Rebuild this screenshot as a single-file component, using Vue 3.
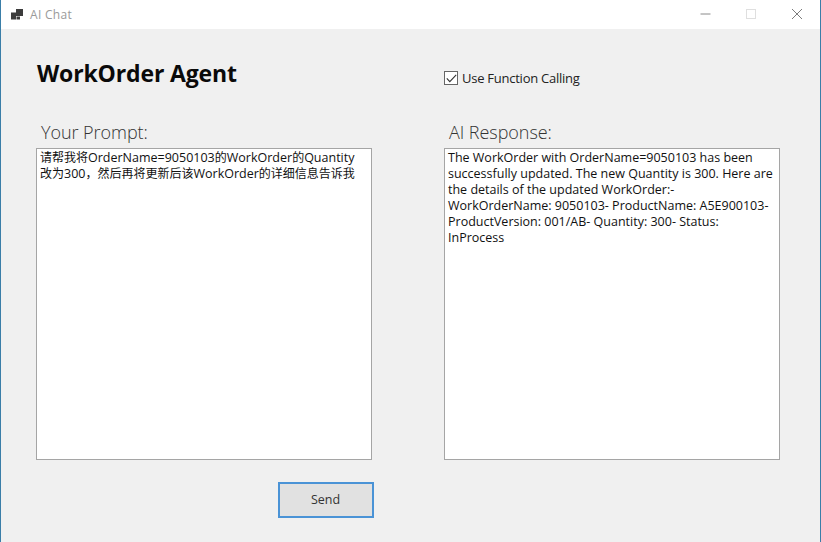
<script setup>
const promptLines = [
  [['c', '请帮我将'], ['l', 'OrderName=9050103'], ['c', '的'], ['l', 'WorkOrder'], ['c', '的'], ['l', 'Quantity']],
  [['c', '改为'], ['l', '300'], ['c', '，然后再将更新后该'], ['l', 'WorkOrder'], ['c', '的详细信息告诉我']]
]
const responseLines = [
  'The WorkOrder with OrderName=9050103 has been',
  'successfully updated. The new Quantity is 300. Here are',
  'the details of the updated WorkOrder:-',
  'WorkOrderName: 9050103- ProductName: A5E900103-',
  'ProductVersion: 001/AB- Quantity: 300- Status:',
  'InProcess'
]
</script>

<template>
  <div class="window">
    <header class="titlebar">
      <div class="title-left">
        <svg class="app-icon" width="12" height="12" viewBox="0 0.5 12 12">
          <rect x="0" y="4" width="5" height="7" fill="#3c3c3c" />
          <rect x="5" y="0" width="7" height="7.5" fill="#3c3c3c" />
          <rect x="5.5" y="8" width="3.5" height="3" fill="#3c3c3c" />
        </svg>
        <span class="app-title">AI Chat</span>
      </div>
      <div class="controls">
        <svg width="12" height="12" viewBox="0 0 12 12"><path d="M1.5 6H11.5" stroke="#8a8a8a" fill="none" /></svg>
        <svg width="12" height="12" viewBox="0 0 12 12"><rect x="1.5" y="1.5" width="9" height="9" stroke="#dfdfdf" fill="none" /></svg>
        <svg width="12" height="12" viewBox="0 0 12 12"><path d="M1 1L11 11M11 1L1 11" stroke="#7c7c7c" fill="none" /></svg>
      </div>
    </header>
    <main class="content">
      <div class="top-row">
        <h1 class="heading">WorkOrder Agent</h1>
        <label class="check">
          <span class="box">
            <svg width="11" height="9" viewBox="0 0 11 9"><path d="M0.8 4.4L3.8 7.6L10.2 0.8" stroke="#333" stroke-width="1.1" fill="none" /></svg>
          </span>
          <span>Use Function Calling</span>
        </label>
      </div>
      <div class="panels">
        <section class="panel">
          <div class="panel-label">Your Prompt:</div>
          <div class="textbox">
            <div v-for="(line, i) in promptLines" :key="i"><span v-for="(seg, j) in line" :key="j" :class="seg[0] === 'c' ? 'cjk' : ''">{{ seg[1] }}</span></div>
          </div>
        </section>
        <section class="panel">
          <div class="panel-label">AI Response:</div>
          <div class="textbox">
            <div v-for="line in responseLines" :key="line">{{ line }}</div>
          </div>
        </section>
      </div>
      <div class="actions">
        <button class="send">Send</button>
      </div>
    </main>
  </div>
</template>

<style>
html, body { margin: 0; padding: 0; overflow: hidden; }
</style>

<style scoped>
.window {
  width: 821px;
  height: 542px;
  box-sizing: border-box;
  background: #f0f0f0;
  border-left: 1px solid #3a7ea8;
  border-right: 1px solid #3a7ea8;
  font-family: "Open Sans", "Noto Sans", "Noto Sans CJK SC", sans-serif;
  color: #1c1c1c;
  display: flex;
  flex-direction: column;
}
.titlebar {
  height: 29px;
  background: #fff;
  display: flex;
  align-items: center;
  justify-content: space-between;
  flex: none;
}
.title-left {
  display: flex;
  align-items: center;
  gap: 7px;
  padding-left: 10px;
}
.app-icon { display: block; }
.app-title {
  font-size: 12px;
  letter-spacing: 0.3px;
  color: #9a9a9a;
}
.controls {
  display: flex;
  align-items: center;
  gap: 34px;
  padding: 0 17px 1px 0;
}
.controls svg { display: block; }
.content {
  flex: 1;
  padding: 0 40px 0 35px;
}
.top-row {
  display: flex;
  height: 76px;
}
.heading {
  margin: 28px 0 0 1px;
  width: 407px;
  font-size: 23px;
  line-height: 32px;
  font-weight: 700;
  color: #0a0a0a;
  letter-spacing: -0.15px;
  white-space: nowrap;
}
.check {
  margin-top: 39px;
  height: 20px;
  display: flex;
  align-items: center;
  gap: 4px;
  font-size: 13px;
  letter-spacing: -0.25px;
  color: #222;
}
.box {
  width: 12px;
  height: 12px;
  border: 1px solid #666;
  background: #fff;
  display: flex;
  align-items: center;
  justify-content: center;
}
.panels {
  display: flex;
  gap: 72px;
}
.panel { width: 336px; }
.panel-label {
  height: 43px;
  padding: 15px 0 0 5px;
  box-sizing: border-box;
  font-size: 18px;
  line-height: 24px;
  font-weight: 300;
  color: #333;
  letter-spacing: -0.05px;
}
.textbox {
  height: 312px;
  box-sizing: border-box;
  border: 1px solid #a5a5a5;
  background: #fff;
  padding: 1px 3px;
  font-size: 12.5px;
  line-height: 16px;
  color: #111;
  white-space: nowrap;
  overflow: hidden;
}
.cjk { font-size: 12px; }
.actions {
  display: flex;
  justify-content: flex-start;
  padding: 22px 0 0 242px;
}
.send {
  width: 96px;
  height: 36px;
  box-sizing: border-box;
  border: 2px solid #4a93d6;
  background: #e1e1e1;
  font-family: inherit;
  font-size: 12.5px;
  color: #333;
  padding: 0 1px 2px 0;
}
</style>
